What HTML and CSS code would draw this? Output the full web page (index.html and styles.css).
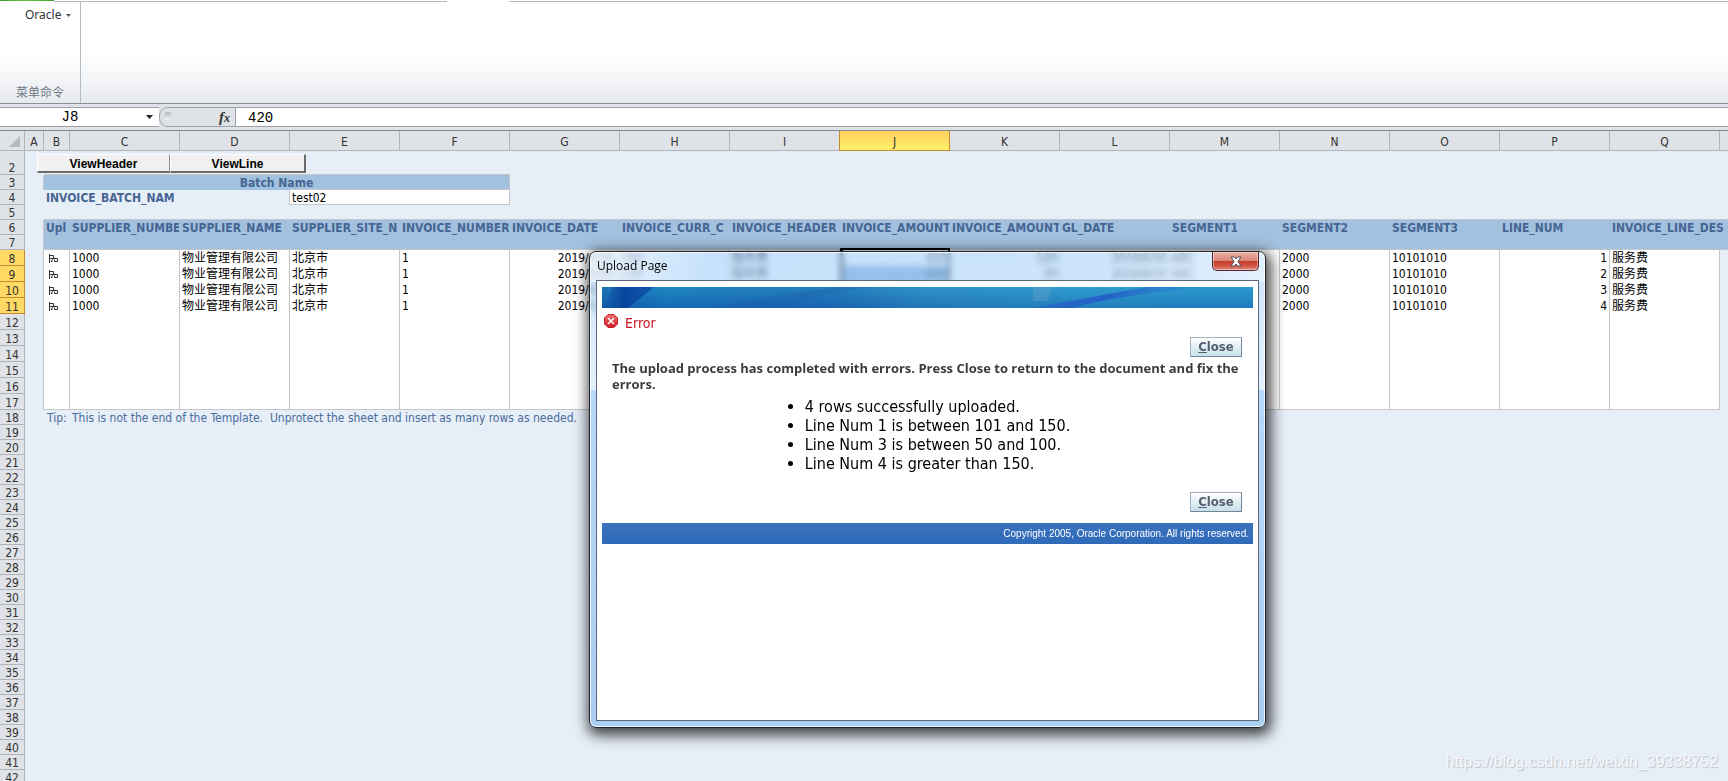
FILE: index.html
```html
<!DOCTYPE html>
<html lang="zh-CN">
<head>
<meta charset="utf-8">
<title>Upload Page</title>
<link rel="stylesheet" href="styles.css">
</head>
<body>
<div class="app">
<header class="ribbon">
  <div class="tabs"><span class="tab-file"></span><span class="tab-line tab-left"></span><span class="tab-gap"></span><span class="tab-line tab-rest"></span></div>
  <div class="group">
    <button class="menu" type="button">Oracle <svg width="5" height="3" viewBox="0 0 5 3"><path d="M0 0h5L2.500 3z" fill="#555"/></svg></button>
    <span class="group-name">菜单命令</span>
  </div>
</header>
<div class="formula">
  <div class="namebox"><input class="name-input" aria-label="Name box" value="J8"><svg width="7" height="4" viewBox="0 0 7 4"><path d="M0 0h7L3.500 4z" fill="#222"/></svg></div>
  <div class="fx-area"><svg class="knob" width="12" height="12" viewBox="0 0 12 12"><defs><linearGradient id="k" x2="0" y2="1"><stop offset="0" stop-color="#b4b7bc"/><stop offset="1" stop-color="#f4f5f6"/></linearGradient></defs><circle cx="5" cy="5" r="4" fill="url(#k)"/></svg><span class="fx"><i>f</i><i class="fx-x">x</i></span></div>
  <input class="formula-input" aria-label="Formula bar" value="420">
</div>
<table class="sheet">
<colgroup><col class="c-num"><col class="c-a"><col class="c-b"><col span="16" class="c-w"></colgroup>
<thead><tr><th class="corner"><svg width="11" height="11" viewBox="0 0 11 11"><path d="M11 0v11H0z" fill="#b5b8bd"/></svg></th><th>A</th><th>B</th><th>C</th><th>D</th><th>E</th><th>F</th><th>G</th><th>H</th><th>I</th><th class="on">J</th><th>K</th><th>L</th><th>M</th><th>N</th><th>O</th><th>P</th><th>Q</th><th></th></tr></thead>
<tbody>
<tr class="tall"><th>2</th><td colspan="18" class="bar"><div class="views"><button type="button" class="view">ViewHeader</button><button type="button" class="view">ViewLine</button></div></td></tr>
<tr><th>3</th><td class="edge"></td><td colspan="5" class="head center top">Batch Name</td><td colspan="12"></td></tr>
<tr><th>4</th><td></td><td colspan="2" class="label">INVOICE_BATCH_NAM</td><td class="edge"></td><td colspan="2" class="cell low">test02</td><td colspan="12"></td></tr>
<tr><th>5</th><td></td><td colspan="17" class="low"></td></tr>
<tr class="heads"><th>6</th><td class="edge"></td><td class="head">Upl</td><td class="head">SUPPLIER_NUMBE</td><td class="head">SUPPLIER_NAME</td><td class="head">SUPPLIER_SITE_N</td><td class="head">INVOICE_NUMBER</td><td class="head">INVOICE_DATE</td><td class="head">INVOICE_CURR_C</td><td class="head">INVOICE_HEADER</td><td class="head">INVOICE_AMOUNT</td><td class="head">INVOICE_AMOUNT</td><td class="head">GL_DATE</td><td class="head">SEGMENT1</td><td class="head">SEGMENT2</td><td class="head">SEGMENT3</td><td class="head">LINE_NUM</td><td colspan="2" class="head">INVOICE_LINE_DES</td></tr>
<tr><th>7</th><td class="edge"></td><td colspan="17" class="head low"></td></tr>
<tr class="row"><th class="on">8</th><td></td><td class="flag"><svg width="9" height="9" viewBox="0 0 9 9"><path d="M.5 0v9M.5 1.500H4.500v3H.5M3.500 7.500H2L4.500 4.500H8.500v3H5.500v-2" fill="none" stroke="#333"/></svg></td><td>1000</td><td>物业管理有限公司</td><td>北京市</td><td>1</td><td class="num date">2019/6/30</td><td>CNY</td><td>服务费</td><td class="num active">420</td><td class="num">120</td><td class="num">2019/6/30</td><td>ABC</td><td>2000</td><td>10101010</td><td class="num">1</td><td>服务费</td><td></td></tr>
<tr class="row"><th class="on">9</th><td></td><td class="flag"><svg width="9" height="9" viewBox="0 0 9 9"><path d="M.5 0v9M.5 1.500H4.500v3H.5M3.500 7.500H2L4.500 4.500H8.500v3H5.500v-2" fill="none" stroke="#333"/></svg></td><td>1000</td><td>物业管理有限公司</td><td>北京市</td><td>1</td><td class="num date">2019/6/30</td><td>CNY</td><td>服务费</td><td class="num picked">420</td><td class="num">30</td><td class="num">2019/6/30</td><td>ABC</td><td>2000</td><td>10101010</td><td class="num">2</td><td>服务费</td><td></td></tr>
<tr class="row"><th class="on">10</th><td></td><td class="flag"><svg width="9" height="9" viewBox="0 0 9 9"><path d="M.5 0v9M.5 1.500H4.500v3H.5M3.500 7.500H2L4.500 4.500H8.500v3H5.500v-2" fill="none" stroke="#333"/></svg></td><td>1000</td><td>物业管理有限公司</td><td>北京市</td><td>1</td><td class="num date">2019/6/30</td><td></td><td></td><td class="picked"></td><td></td><td></td><td></td><td>2000</td><td>10101010</td><td class="num">3</td><td>服务费</td><td></td></tr>
<tr class="row"><th class="on">11</th><td></td><td class="flag"><svg width="9" height="9" viewBox="0 0 9 9"><path d="M.5 0v9M.5 1.500H4.500v3H.5M3.500 7.500H2L4.500 4.500H8.500v3H5.500v-2" fill="none" stroke="#333"/></svg></td><td>1000</td><td>物业管理有限公司</td><td>北京市</td><td>1</td><td class="num date">2019/6/30</td><td></td><td></td><td class="picked"></td><td></td><td></td><td></td><td>2000</td><td>10101010</td><td class="num">4</td><td>服务费</td><td></td></tr>
<tr class="row"><th>12</th><td></td><td></td><td></td><td></td><td></td><td></td><td></td><td></td><td></td><td></td><td></td><td></td><td></td><td></td><td></td><td></td><td></td><td></td></tr>
<tr class="row"><th>13</th><td></td><td></td><td></td><td></td><td></td><td></td><td></td><td></td><td></td><td></td><td></td><td></td><td></td><td></td><td></td><td></td><td></td><td></td></tr>
<tr class="row"><th>14</th><td></td><td></td><td></td><td></td><td></td><td></td><td></td><td></td><td></td><td></td><td></td><td></td><td></td><td></td><td></td><td></td><td></td><td></td></tr>
<tr class="row"><th>15</th><td></td><td></td><td></td><td></td><td></td><td></td><td></td><td></td><td></td><td></td><td></td><td></td><td></td><td></td><td></td><td></td><td></td><td></td></tr>
<tr class="row"><th>16</th><td></td><td></td><td></td><td></td><td></td><td></td><td></td><td></td><td></td><td></td><td></td><td></td><td></td><td></td><td></td><td></td><td></td><td></td></tr>
<tr class="row last"><th>17</th><td></td><td></td><td></td><td></td><td></td><td></td><td></td><td></td><td></td><td></td><td></td><td></td><td></td><td></td><td></td><td></td><td></td><td></td></tr>
<tr><th>18</th><td></td><td class="tip tip-name">Tip:</td><td colspan="16" class="tip">This is not the end of the Template.&nbsp; Unprotect the sheet and insert as many rows as needed.</td></tr>
<tr><th>19</th><td colspan="18"></td></tr>
<tr><th>20</th><td colspan="18"></td></tr>
<tr><th>21</th><td colspan="18"></td></tr>
<tr><th>22</th><td colspan="18"></td></tr>
<tr><th>23</th><td colspan="18"></td></tr>
<tr><th>24</th><td colspan="18"></td></tr>
<tr><th>25</th><td colspan="18"></td></tr>
<tr><th>26</th><td colspan="18"></td></tr>
<tr><th>27</th><td colspan="18"></td></tr>
<tr><th>28</th><td colspan="18"></td></tr>
<tr><th>29</th><td colspan="18"></td></tr>
<tr><th>30</th><td colspan="18"></td></tr>
<tr><th>31</th><td colspan="18"></td></tr>
<tr><th>32</th><td colspan="18"></td></tr>
<tr><th>33</th><td colspan="18"></td></tr>
<tr><th>34</th><td colspan="18"></td></tr>
<tr><th>35</th><td colspan="18"></td></tr>
<tr><th>36</th><td colspan="18"></td></tr>
<tr><th>37</th><td colspan="18"></td></tr>
<tr><th>38</th><td colspan="18"></td></tr>
<tr><th>39</th><td colspan="18"></td></tr>
<tr><th>40</th><td colspan="18"></td></tr>
<tr><th>41</th><td colspan="18"></td></tr>
<tr><th>42</th><td colspan="18"></td></tr>
</tbody>
</table>
<section class="dialog" role="dialog" aria-labelledby="dialog-title">
  <div class="titlebar"><h1 id="dialog-title" class="title">Upload Page</h1>
    <button type="button" class="x" aria-label="Close window"><svg width="12" height="11" viewBox="0 0 12 11"><path d="M1 1h3.500L6 3l1.500-2H11L8 5.500 11 10H7.500L6 8l-1.500 2H1l3-4.500z" fill="#fff" stroke="#4a4c5c"/></svg></button></div>
  <div class="client">
    <svg class="banner" viewBox="0 0 651 21" preserveAspectRatio="none">
      <defs>
        <linearGradient id="b" x2="1"><stop offset="0" stop-color="#0c56a8"/><stop offset=".1" stop-color="#1173bb"/><stop offset=".25" stop-color="#1767b3"/><stop offset=".36" stop-color="#1b69b5"/><stop offset=".5" stop-color="#2a87c2"/><stop offset=".75" stop-color="#2996cb"/><stop offset="1" stop-color="#2590cf"/></linearGradient>
        <linearGradient id="s" x2="0" y2="1"><stop offset="0" stop-color="#35a5cc" stop-opacity=".4"/><stop offset="1" stop-color="#185ca8" stop-opacity=".4"/></linearGradient>
        <linearGradient id="w" x2="1"><stop offset="0" stop-color="#2359c6" stop-opacity=".5"/><stop offset=".4" stop-color="#2560c9"/><stop offset="1" stop-color="#2a86d0" stop-opacity=".2"/></linearGradient>
        <linearGradient id="d" x2="1"><stop offset="0" stop-color="#053c98" stop-opacity="0"/><stop offset=".4" stop-color="#053c98" stop-opacity=".8"/><stop offset="1" stop-color="#0a4ea6" stop-opacity=".8"/></linearGradient>
      </defs>
      <path d="M0 0h651v21H0z" fill="url(#b)"/><path d="M0 0h651v21H0z" fill="url(#s)"/>
      <path d="M10 0h42Q36 13 26 21H2z" fill="url(#d)"/>
      <path d="M180 21Q220 6 270 0H235Q170 8 110 21z" fill="#1759ac" opacity=".25"/>
      <path d="M470 21Q520 7 610 0h-65Q490 10 430 21z" fill="url(#w)"/><path d="M431 0h19l-4 14h-15z" fill="#68a2cc" opacity=".4"/>
    </svg>
    <div class="error"><svg width="14" height="14" viewBox="0 0 14 14"><defs><linearGradient id="r" x2="0" y2="1"><stop offset="0" stop-color="#ee7070"/><stop offset="1" stop-color="#cf1d24"/></linearGradient></defs><path d="M4 .5h6L13.500 4v6L10 13.500H4L.5 10V4z" fill="url(#r)" stroke="#c8262b" stroke-linejoin="round"/><path d="m4 4 6 6m0-6-6 6" stroke="#fff" stroke-width="1.500"/></svg><h2 class="error-title">Error</h2></div>
    <div class="actions first"><button type="button" class="close"><u>C</u>lose</button></div>
    <p class="message">The upload process has completed with errors. Press Close to return to the document and fix the errors.</p>
    <ul class="results"><li>4 rows successfully uploaded.</li><li>Line Num 1 is between 101 and 150.</li><li>Line Num 3 is between 50 and 100.</li><li>Line Num 4 is greater than 150.</li></ul>
    <div class="actions"><button type="button" class="close"><u>C</u>lose</button></div>
    <footer class="copyright">Copyright 2005, Oracle Corporation. All rights reserved.</footer>
  </div>
</section>
<div class="watermark">https://blog.csdn.net/weixin_39338752</div>
</div>
</body>
</html>
```
FILE: styles.css
```css
* { box-sizing: border-box; }
body { margin: 0; }
button, input { font: inherit; margin: 0; }
.app {
  position: relative;
  height: 100vh;
  overflow: hidden;
  background: #e6eef8;
  font: 12px "DejaVu Sans Condensed", "Noto Sans CJK SC", sans-serif;
  color: #000;
}

/* Ribbon */
.ribbon {
  display: flex;
  flex-direction: column;
  height: 104px;
  background: linear-gradient(#fff 50%, #f4f6f8 75%, #e7eaee);
  border-bottom: 1px solid #8b9097;
}
.tabs { display: flex; height: 2px; flex: none; }
.tab-file { width: 54px; background: linear-gradient(90deg, #3f9a2c, #6cc24a, #3f9a2c); height: 1px; }
.tab-line { border-bottom: 1px solid #b4b9bf; }
.tab-left { width: 393px; }
.tab-gap { width: 62px; }
.tab-rest { flex: 1; }
.group {
  display: flex;
  flex-direction: column;
  justify-content: space-between;
  align-items: flex-start;
  flex: 1;
  width: 81px;
  padding: 4px 0 2px 16px;
  border-right: 1px solid #b6bcc6;
}
.menu {
  display: flex;
  align-items: center;
  gap: 5px;
  padding: 0 0 0 9px;
  border: 0;
  background: none;
  font: 12px/18px "Noto Sans", sans-serif;
  color: #333;
}
.group-name { font: 12px/18px "Noto Sans CJK SC", sans-serif; color: #6d7686; }

/* Formula bar */
.formula {
  display: flex;
  height: 27px;
  padding-top: 3px;
  background: #dfe2e8;
  border-bottom: 1px solid #85898f;
  font: 14px "Liberation Mono", monospace;
}
.formula > * { height: 20px; border-top: 1px solid #9ba0a8; border-bottom: 1px solid #9ba0a8; background: #fff; }
.namebox { display: flex; align-items: center; width: 159px; }
.name-input { width: 146px; padding: 0 6px 0 0; border: 0; background: none; text-align: center; }
.fx-area {
  display: flex;
  align-items: center;
  justify-content: space-between;
  width: 77px;
  padding: 0 5px 0 3px;
  border-left: 1px solid #9ba0a8;
  border-right: 1px solid #9ba0a8;
  border-radius: 9px 0 0 9px;
}
.formula > .fx-area { background: #dfe2e6; }
.fx { font: bold 15px/18px "Liberation Serif", serif; color: #333; }
.fx-x { font-size: 12px; }
.formula-input { flex: 1; padding: 2px 12px 0; border-left: 0; border-right: 0; }

/* Sheet */
.sheet { table-layout: fixed; width: 1830px; border-collapse: separate; border-spacing: 0; }
.c-num { width: 25px; }
.c-a { width: 19px; }
.c-b { width: 26px; }
.c-w { width: 110px; }
.sheet tr { height: 15px; }
.sheet thead tr { height: 20px; }
.sheet .tall { height: 24px; }
.sheet .row { height: 16px; }
.sheet th {
  padding: 2px 0 0;
  border: solid #b1b5ba;
  border-width: 0 1px 1px 0;
  background: #dfe2e6;
  font: 12px/12px "DejaVu Sans Condensed", sans-serif;
  color: #333;
  vertical-align: bottom;
}
.sheet thead th { vertical-align: middle; padding-top: 3px; }
.sheet thead .corner { text-align: right; padding: 2px 4px 0 0; line-height: 0; }
.sheet .on { background: #ffd963; border-color: #c38a30; }
.sheet thead .on { background: linear-gradient(#ffcf5c, #fff06c); box-shadow: -1px 0 #c38a30; }
.sheet td {
  padding: 2px 2px 0;
  border: solid transparent;
  border-width: 0 1px 0 0;
  line-height: 13px;
  white-space: nowrap;
  overflow: hidden;
}
.sheet .bar { padding: 0 0 0 12px; vertical-align: middle; border-color: transparent; }
.views { display: flex; }
.view {
  width: 133px;
  height: 19px;
  padding: 2px 0 0;
  border: solid;
  border-width: 1px 1px 2px;
  border-color: #fff #8e8e8e #6a6a6a #fff;
  background: #f0f0f0;
  font: bold 12px/14px "Liberation Sans", sans-serif;
}
.view:last-child { width: 136px; border-right: 2px solid #6a6a6a; }
.sheet .edge { border-right-color: #c6c6c8; }
.sheet .head { background: #a2c1df; border-color: #a2c1df; color: #456592; font-weight: bold; }
.sheet .top { border-right-color: #c6c6c8; box-shadow: 0 -1px #c6c6c8; }
.center { text-align: center; }
.sheet .label { color: #456592; font-weight: bold; }
.sheet .cell { background: #fff; border-color: #c6c6c8; box-shadow: 0 -1px #c6c6c8; }
.sheet .low { border-bottom: 1px solid #c6c6c8; line-height: 12px; }
.sheet .row td { padding-top: 1px; background: #fff; border-color: #c6c6c8; line-height: 15px; }
.sheet .row td:nth-child(2), .sheet .row td:last-child { background: none; }
.sheet .row td:last-child { border-color: transparent; }
.sheet .last td { border-bottom-width: 1px; line-height: 12px; }
.sheet .last td:nth-child(2) { border-bottom-width: 0; }
.sheet .row .flag { line-height: 0; padding-left: 5px; }
.num { text-align: right; }
.sheet .row .date { padding-right: 6px; }
.sheet .row .active { border-right: 2px solid #000; border-left: 3px solid #000; box-shadow: 0 -2px #000; }
.sheet .row .picked { border-right: 2px solid #000; border-left: 3px solid #000; background: #6f9fd2; }
.sheet .tip { color: #4a6c9c; }
.sheet .tip-name { padding-left: 3px; padding-right: 0; }

/* Upload dialog */
.dialog {
  position: absolute;
  left: 589px;
  top: 251px;
  display: flex;
  flex-direction: column;
  width: 677px;
  height: 477px;
  padding: 0 6px 6px;
  border: 1px solid #1c2430;
  border-radius: 7px;
  background:
    linear-gradient(110deg, rgba(255,255,255,.6) 0, rgba(160,205,250,.2) 18%, rgba(160,205,250,.1) 75%, rgba(255,255,255,.4) 100%) 0 0 / 100% 30px no-repeat,
    linear-gradient(rgba(160,205,248,.5) 0, rgba(180,215,250,.6) 7%, rgba(225,239,253,.9) 29%, rgba(176,213,250,.9) 29%, rgba(168,205,240,.98) 100%);
  backdrop-filter: blur(3px);
  box-shadow: inset 0 0 0 1px rgba(255,255,255,.8), 2px 4px 14px 3px rgba(0,0,0,.75);
}
.titlebar { display: flex; justify-content: space-between; height: 28px; flex: none; }
.title { margin: 0; padding: 6px 0 0 1px; font: 12px/16px "Open Sans", sans-serif; }
.x {
  display: flex;
  align-items: center;
  justify-content: center;
  width: 47px;
  height: 19px;
  padding: 0;
  border: 1px solid #552633;
  border-top: 0;
  border-radius: 0 0 5px 5px;
  background: linear-gradient(#eeb1a9, #dc8579 48%, #c33d26 50%, #cf5240 75%, #dd8f83);
  box-shadow: inset 0 0 0 1px rgba(255,255,255,.4);
}
.client {
  flex: 1;
  padding: 6px 5px;
  border: 1px solid #59677a;
  background: #fff;
}
.banner { display: block; width: 100%; height: 21px; }
.error { display: flex; gap: 7px; padding: 6px 2px 0; }
.error-title { margin: 0; font-size: 14px; font-weight: normal; line-height: 18px; color: #cc1122; }
.actions { display: flex; justify-content: flex-end; padding: 0 11px 11px; }
.first { padding: 5px 11px 3px; }
.close {
  width: 52px;
  height: 20px;
  padding: 0;
  border: 1px solid;
  border-color: #a4afbb #76839a #76839a #a4afbb;
  background: linear-gradient(#fff, #c5e1ea);
  color: #555e70;
  font-weight: bold;
  font-size: 13px;
  line-height: 16px;
}
.message { margin: 0; padding: 0 0 0 10px; font: bold 13px/16px "Open Sans", sans-serif; color: #3c3c3c; }
.results { width: max-content; margin: 5px auto 19px; padding-left: 20px; font-size: 16px; line-height: 19px; }
.copyright {
  padding-right: 4px;
  background: linear-gradient(#3a73bf, #2f6ab8);
  color: #fff;
  font: 10px/21px "Liberation Sans", sans-serif;
  text-align: right;
}
.watermark {
  position: absolute;
  right: 10px;
  bottom: 9px;
  font: 16px/20px "Liberation Sans", sans-serif;
  color: #f6f8fb;
  text-shadow: 1px 1px 1px #b9bfc8;
}
```
